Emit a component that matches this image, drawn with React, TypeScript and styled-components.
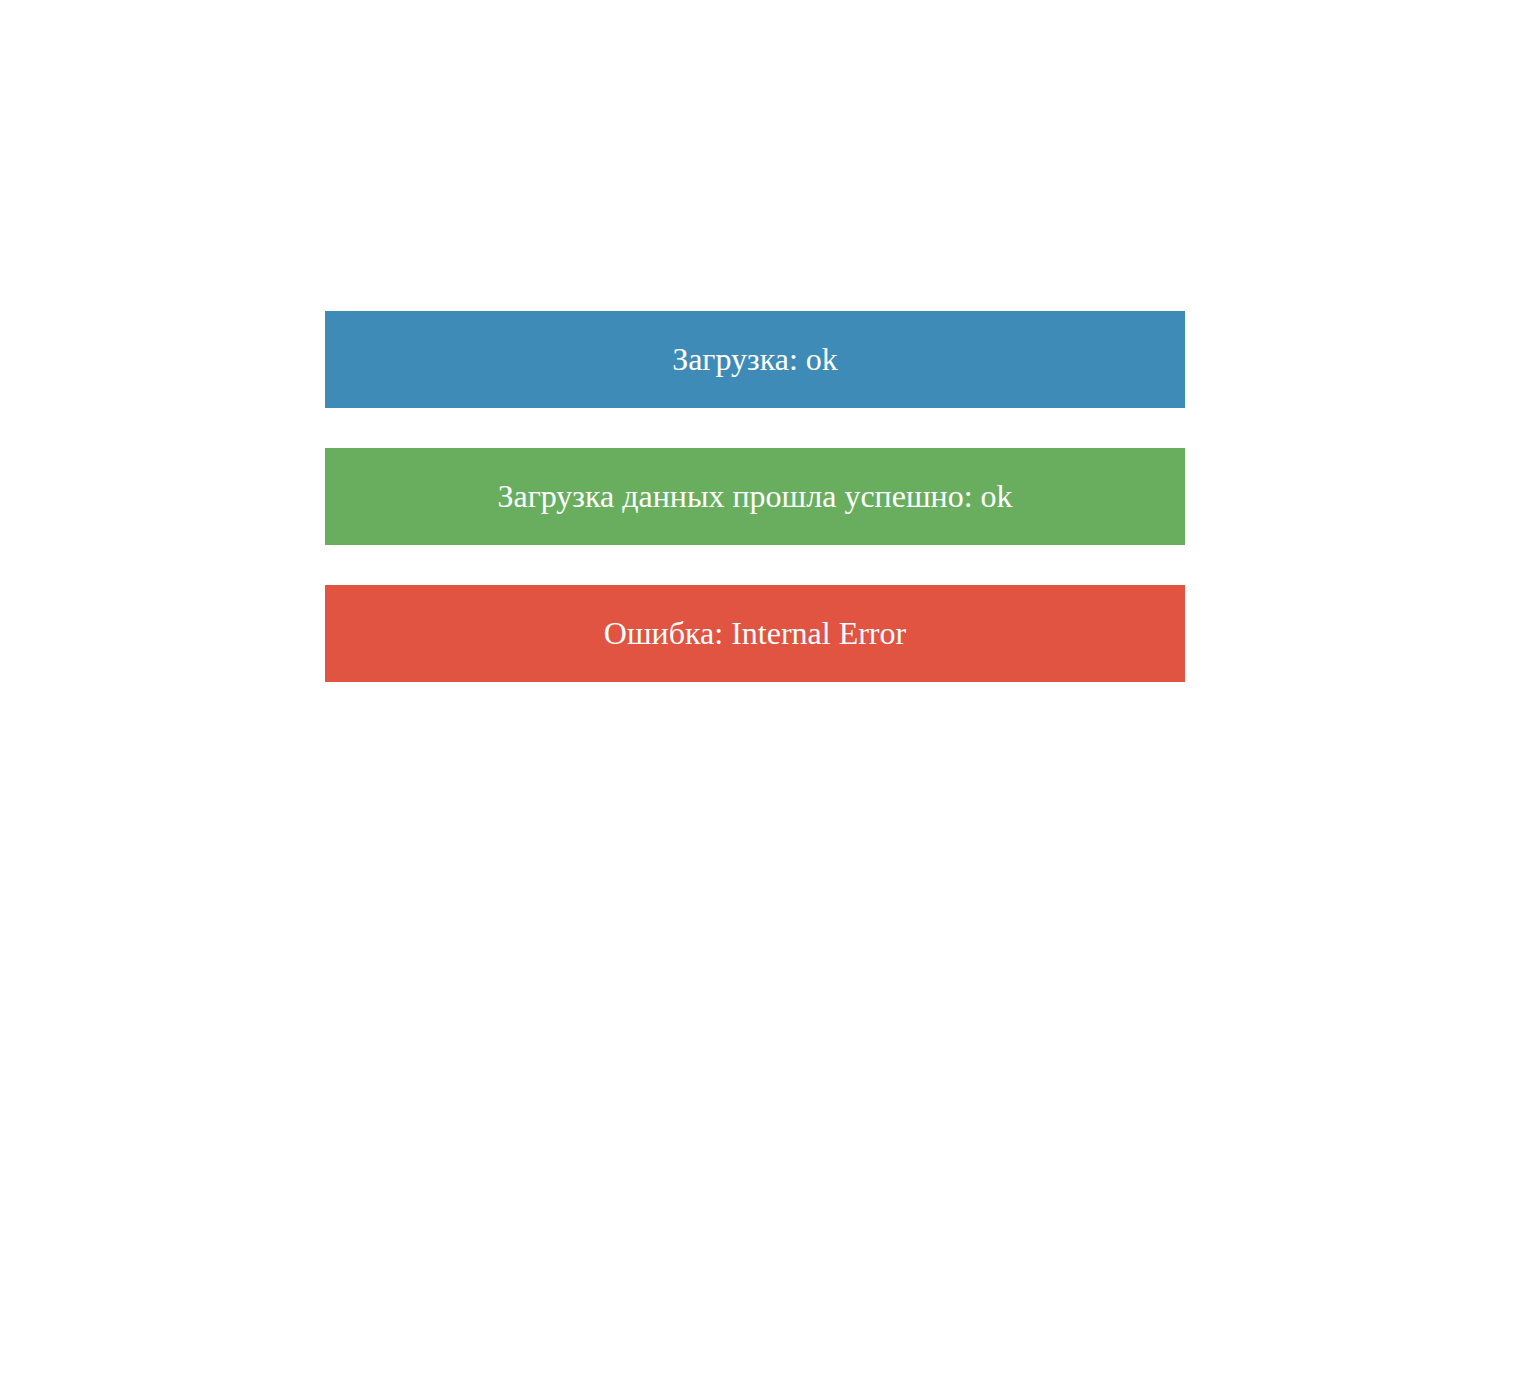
import styled, { createGlobalStyle } from "styled-components";

type Status = "info" | "success" | "error";

const colors: Record<Status, string> = {
  info: "#3d8bb6",
  success: "#69ae5e",
  error: "#e15442",
};

const GlobalStyle = createGlobalStyle`
  html, body {
    margin: 0;
    padding: 0;
    background: #fff;
  }
  body {
    font-family: "Liberation Serif", "Times New Roman", serif;
  }
`;

export default function App() {
  const messages: { status: Status; text: string }[] = [
    { status: "info", text: "Загрузка: ok" },
    { status: "success", text: "Загрузка данных прошла успешно: ok" },
    { status: "error", text: "Ошибка: Internal Error" },
  ];

  return (
    <Page>
      <GlobalStyle />
      <List>
        {messages.map((m) => (
          <Alert key={m.text} $status={m.status}>
            {m.text}
          </Alert>
        ))}
      </List>
    </Page>
  );
}

const Page = styled.main`
  min-height: 1386px;
  padding-top: 311px;
  padding-right: 3px;
  box-sizing: border-box;
  display: flex;
  justify-content: center;
  align-items: flex-start;
`;

const List = styled.div`
  width: 860px;
  display: flex;
  flex-direction: column;
  gap: 40px;
`;

const Alert = styled.div<{ $status: Status }>`
  height: 97px;
  display: flex;
  align-items: center;
  justify-content: center;
  background-color: ${(p) => colors[p.$status]};
  color: #fff;
  font-size: 32px;
`;
